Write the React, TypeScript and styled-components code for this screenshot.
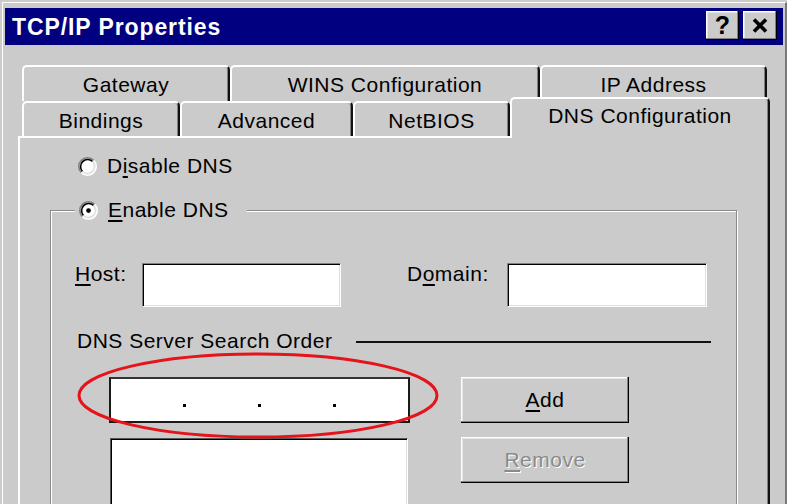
import React from "react";
import styled, { createGlobalStyle } from "styled-components";

const GRAY = "#cbcbcb";
const FONT = `"Liberation Sans", Arial, sans-serif`;

const Global = createGlobalStyle`
  html, body { margin: 0; padding: 0; background: ${GRAY}; }
  body { width: 787px; height: 504px; overflow: hidden; font-family: ${FONT}; color: #000; }
  #root { width: 787px; height: 504px; }
  * { box-sizing: border-box; }
`;

const Window = styled.div`
  width: 787px;
  height: 504px;
  padding: 2px 0 0 2px;
  overflow: hidden;
`;

const Frame = styled.div`
  height: 100%;
  border-top: 1px solid #fff;
  border-left: 1px solid #fff;
  border-right: 2px solid #7a7a7a;
  padding: 5px 2px 0 2px;
  display: flex;
  flex-direction: column;
`;

const TitleBar = styled.div`
  height: 37px;
  flex: none;
  background: #000080;
  display: flex;
  align-items: center;
  justify-content: space-between;
  padding: 0 6px 0 7px;
`;

const Title = styled.div`
  color: #fff;
  font-weight: bold;
  font-size: 23px;
  letter-spacing: 0.9px;
  line-height: 1;
  margin-top: 1px;
`;

const TitleButtons = styled.div`
  display: flex;
  gap: 4px;
  margin-top: -2px;
`;

const raised = `
  box-shadow: inset -1px -1px 0 #000, inset -2px -2px 0 #808080, inset 1px 1px 0 #fff, inset 2px 2px 0 #e4e4e4;
`;

const TitleButton = styled.div<{ $w: number }>`
  width: ${(p) => p.$w}px;
  height: 29px;
  background: ${GRAY};
  ${raised}
  display: flex;
  align-items: center;
  justify-content: center;
  font-weight: bold;
  font-size: 25px;
  line-height: 1;
`;

const TabStrip = styled.div`
  margin: 20px 13px 0 17px;
  display: flex;
  flex-direction: column;
  flex: none;
`;

const TabRow = styled.div<{ $h: number }>`
  display: flex;
  align-items: flex-end;
  height: ${(p) => p.$h}px;
`;

const Tab = styled.div<{ $w: number; $selected?: boolean }>`
  width: ${(p) => p.$w}px;
  height: ${(p) => (p.$selected ? "41px" : "100%")};
  flex: none;
  background: ${GRAY};
  border-top: 2px solid #fff;
  border-left: 2px solid #fff;
  border-right: 2px solid #111;
  border-radius: 5px 5px 0 0;
  box-shadow: inset -1px 0 0 #808080;
  display: flex;
  align-items: center;
  justify-content: center;
  font-size: 21px;
  letter-spacing: 0.5px;
  line-height: 24px;
  padding-top: ${(p) => (p.$selected ? "0" : "2px")};
  padding-bottom: ${(p) => (p.$selected ? "5px" : "0")};
  ${(p) =>
    p.$selected &&
    `
    position: relative;
    z-index: 2;
    margin-bottom: -2px;
  `}
`;

const Panel = styled.div`
  flex: 1;
  margin: 0 13px;
  border-top: 2px solid #fff;
  border-left: 2px solid #fff;
  border-right: 2px solid #111;
  box-shadow: inset -1px 0 0 #808080;
  padding-top: 16px;
  display: flex;
  flex-direction: column;
`;

const RadioRow = styled.label<{ $indent?: number }>`
  display: flex;
  align-items: center;
  gap: 10px;
  height: 24px;
  font-size: 21px;
  letter-spacing: 0.5px;
  line-height: 24px;
  padding-left: ${(p) => p.$indent ?? 0}px;
`;

const Key = styled.u`
  text-decoration-thickness: 1.5px;
  text-underline-offset: 3px;
`;

const GroupBox = styled.fieldset`
  margin: 20px 31px 0 30px;
  padding: 0 25px 0 24px;
  min-width: 0;
  border: 1px solid #8a8a8a;
  box-shadow: inset 1px 1px 0 #fff, 1px 1px 0 #fff;
  flex: 1;
`;

const Legend = styled.legend`
  padding: 0 18px 0 4px;
  background: ${GRAY};
`;

const FieldRow = styled.div`
  display: flex;
  align-items: flex-start;
  margin-top: 41px;
`;

const FieldLabel = styled.span<{ $w: number; $ml?: number }>`
  width: ${(p) => p.$w}px;
  margin-left: ${(p) => p.$ml ?? 0}px;
  margin-top: -1px;
  font-size: 21px;
  letter-spacing: 0.5px;
  line-height: 24px;
  flex: none;
`;

const sunken = `
  background: #fff;
  border: 1px solid;
  border-color: #808080 #fff #fff #808080;
  box-shadow: inset 1px 1px 0 #000, inset -1px -1px 0 #dfdfdf;
`;

const TextBox = styled.div<{ $w: number }>`
  width: ${(p) => p.$w}px;
  height: 44px;
  flex: none;
  ${sunken}
`;

const SectionRow = styled.div`
  display: flex;
  align-items: center;
  height: 24px;
  margin-top: 22px;
  padding-left: 2px;
  font-size: 21px;
  letter-spacing: 0.5px;
  line-height: 24px;
`;

const Rule = styled.div`
  flex: 1;
  height: 2px;
  background: #111;
  margin-left: 24px;
  margin-top: 2px;
`;

const ControlsRow = styled.div`
  display: flex;
  margin-top: 24px;
  align-items: flex-start;
`;

const Column = styled.div<{ $w: number; $ml: number; $gap: number }>`
  width: ${(p) => p.$w}px;
  margin-left: ${(p) => p.$ml}px;
  display: flex;
  flex-direction: column;
  gap: ${(p) => p.$gap}px;
  flex: none;
  position: relative;
`;

const IPField = styled.div`
  height: 46px;
  background: #fff;
  border: 2px solid #1a1a1a;
  border-top-color: #333;
  display: flex;
`;

const Segment = styled.div`
  flex: 1;
`;

const Dot = styled.span`
  flex: none;
  width: 3px;
  height: 3px;
  background: #000;
  margin-top: 25px;
`;

const ListBox = styled.div`
  height: 90px;
  margin: 0 2px 0 1px;
  ${sunken}
  border-color: #555 #fff #fff #555;
`;

const Button = styled.div<{ $disabled?: boolean }>`
  height: 46px;
  background: ${GRAY};
  ${raised}
  display: flex;
  align-items: center;
  justify-content: center;
  font-size: 21px;
  letter-spacing: 0.5px;
  line-height: 24px;
  color: ${(p) => (p.$disabled ? "#8a8a8a" : "#000")};
  text-shadow: ${(p) => (p.$disabled ? "1px 1px 0 #fff" : "none")};
`;

const Annotation = styled.svg`
  position: absolute;
  left: -32px;
  top: -25px;
  pointer-events: none;
  z-index: 3;
`;

const Radio = ({ checked }: { checked?: boolean }) => (
  <svg width="19" height="19" viewBox="0 0 12 12" style={{ flex: "none" }}>
    <circle cx="6" cy="6" r="5" fill="#fff" />
    <path d="M2.11 9.89 A5.5 5.5 0 0 1 9.89 2.11" stroke="#808080" strokeWidth="1" fill="none" />
    <path d="M2.82 9.18 A4.5 4.5 0 0 1 9.18 2.82" stroke="#000" strokeWidth="1" fill="none" />
    <path d="M9.89 2.11 A5.5 5.5 0 0 1 2.11 9.89" stroke="#fff" strokeWidth="1" fill="none" />
    <path d="M9.18 2.82 A4.5 4.5 0 0 1 2.82 9.18" stroke="#dfdfdf" strokeWidth="1" fill="none" />
    {checked && <circle cx="6" cy="6" r="1.5" fill="#000" />}
  </svg>
);

const CloseGlyph = () => (
  <svg width="16" height="15" viewBox="0 0 16 15">
    <path d="M2 1.5 L14 13.5 M14 1.5 L2 13.5" stroke="#000" strokeWidth="3.6" />
  </svg>
);

export default function App() {
  return (
    <>
      <Global />
      <Window>
        <Frame>
          <TitleBar>
            <Title>TCP/IP Properties</Title>
            <TitleButtons>
              <TitleButton $w={33}>?</TitleButton>
              <TitleButton $w={34}>
                <CloseGlyph />
              </TitleButton>
            </TitleButtons>
          </TitleBar>

          <TabStrip>
            <TabRow $h={36}>
              <Tab $w={208}>Gateway</Tab>
              <Tab $w={310}>WINS Configuration</Tab>
              <Tab $w={227}>IP Address</Tab>
            </TabRow>
            <TabRow $h={35}>
              <Tab $w={158}>Bindings</Tab>
              <Tab $w={173}>Advanced</Tab>
              <Tab $w={157}>NetBIOS</Tab>
              <Tab $w={260} $selected>
                DNS Configuration
              </Tab>
            </TabRow>
          </TabStrip>

          <Panel>
            <RadioRow $indent={58}>
              <Radio />
              <span>
                D<Key>i</Key>sable DNS
              </span>
            </RadioRow>

            <GroupBox>
              <Legend>
                <RadioRow>
                  <Radio checked />
                  <span>
                    <Key>E</Key>nable DNS
                  </span>
                </RadioRow>
              </Legend>

              <FieldRow>
                <FieldLabel $w={67}>
                  <Key>H</Key>ost:
                </FieldLabel>
                <TextBox $w={199} />
                <FieldLabel $w={100} $ml={66}>
                  D<Key>o</Key>main:
                </FieldLabel>
                <TextBox $w={200} />
              </FieldRow>

              <SectionRow>
                <span>DNS Server Search Order</span>
                <Rule />
              </SectionRow>

              <ControlsRow>
                <Column $w={301} $ml={34} $gap={15}>
                  <IPField>
                    <Segment />
                    <Dot />
                    <Segment />
                    <Dot />
                    <Segment />
                    <Dot />
                    <Segment />
                  </IPField>
                  <ListBox />
                  <Annotation width="362" height="87" viewBox="0 0 362 87">
                    <ellipse cx="181" cy="43.5" rx="179" ry="41.5" fill="none" stroke="#e5141b" strokeWidth="3" />
                  </Annotation>
                </Column>
                <Column $w={168} $ml={51} $gap={14}>
                  <Button>
                    <span>
                      <Key>A</Key>dd
                    </span>
                  </Button>
                  <Button $disabled>
                    <span>
                      <Key>R</Key>emove
                    </span>
                  </Button>
                </Column>
              </ControlsRow>
            </GroupBox>
          </Panel>
        </Frame>
      </Window>
    </>
  );
}
